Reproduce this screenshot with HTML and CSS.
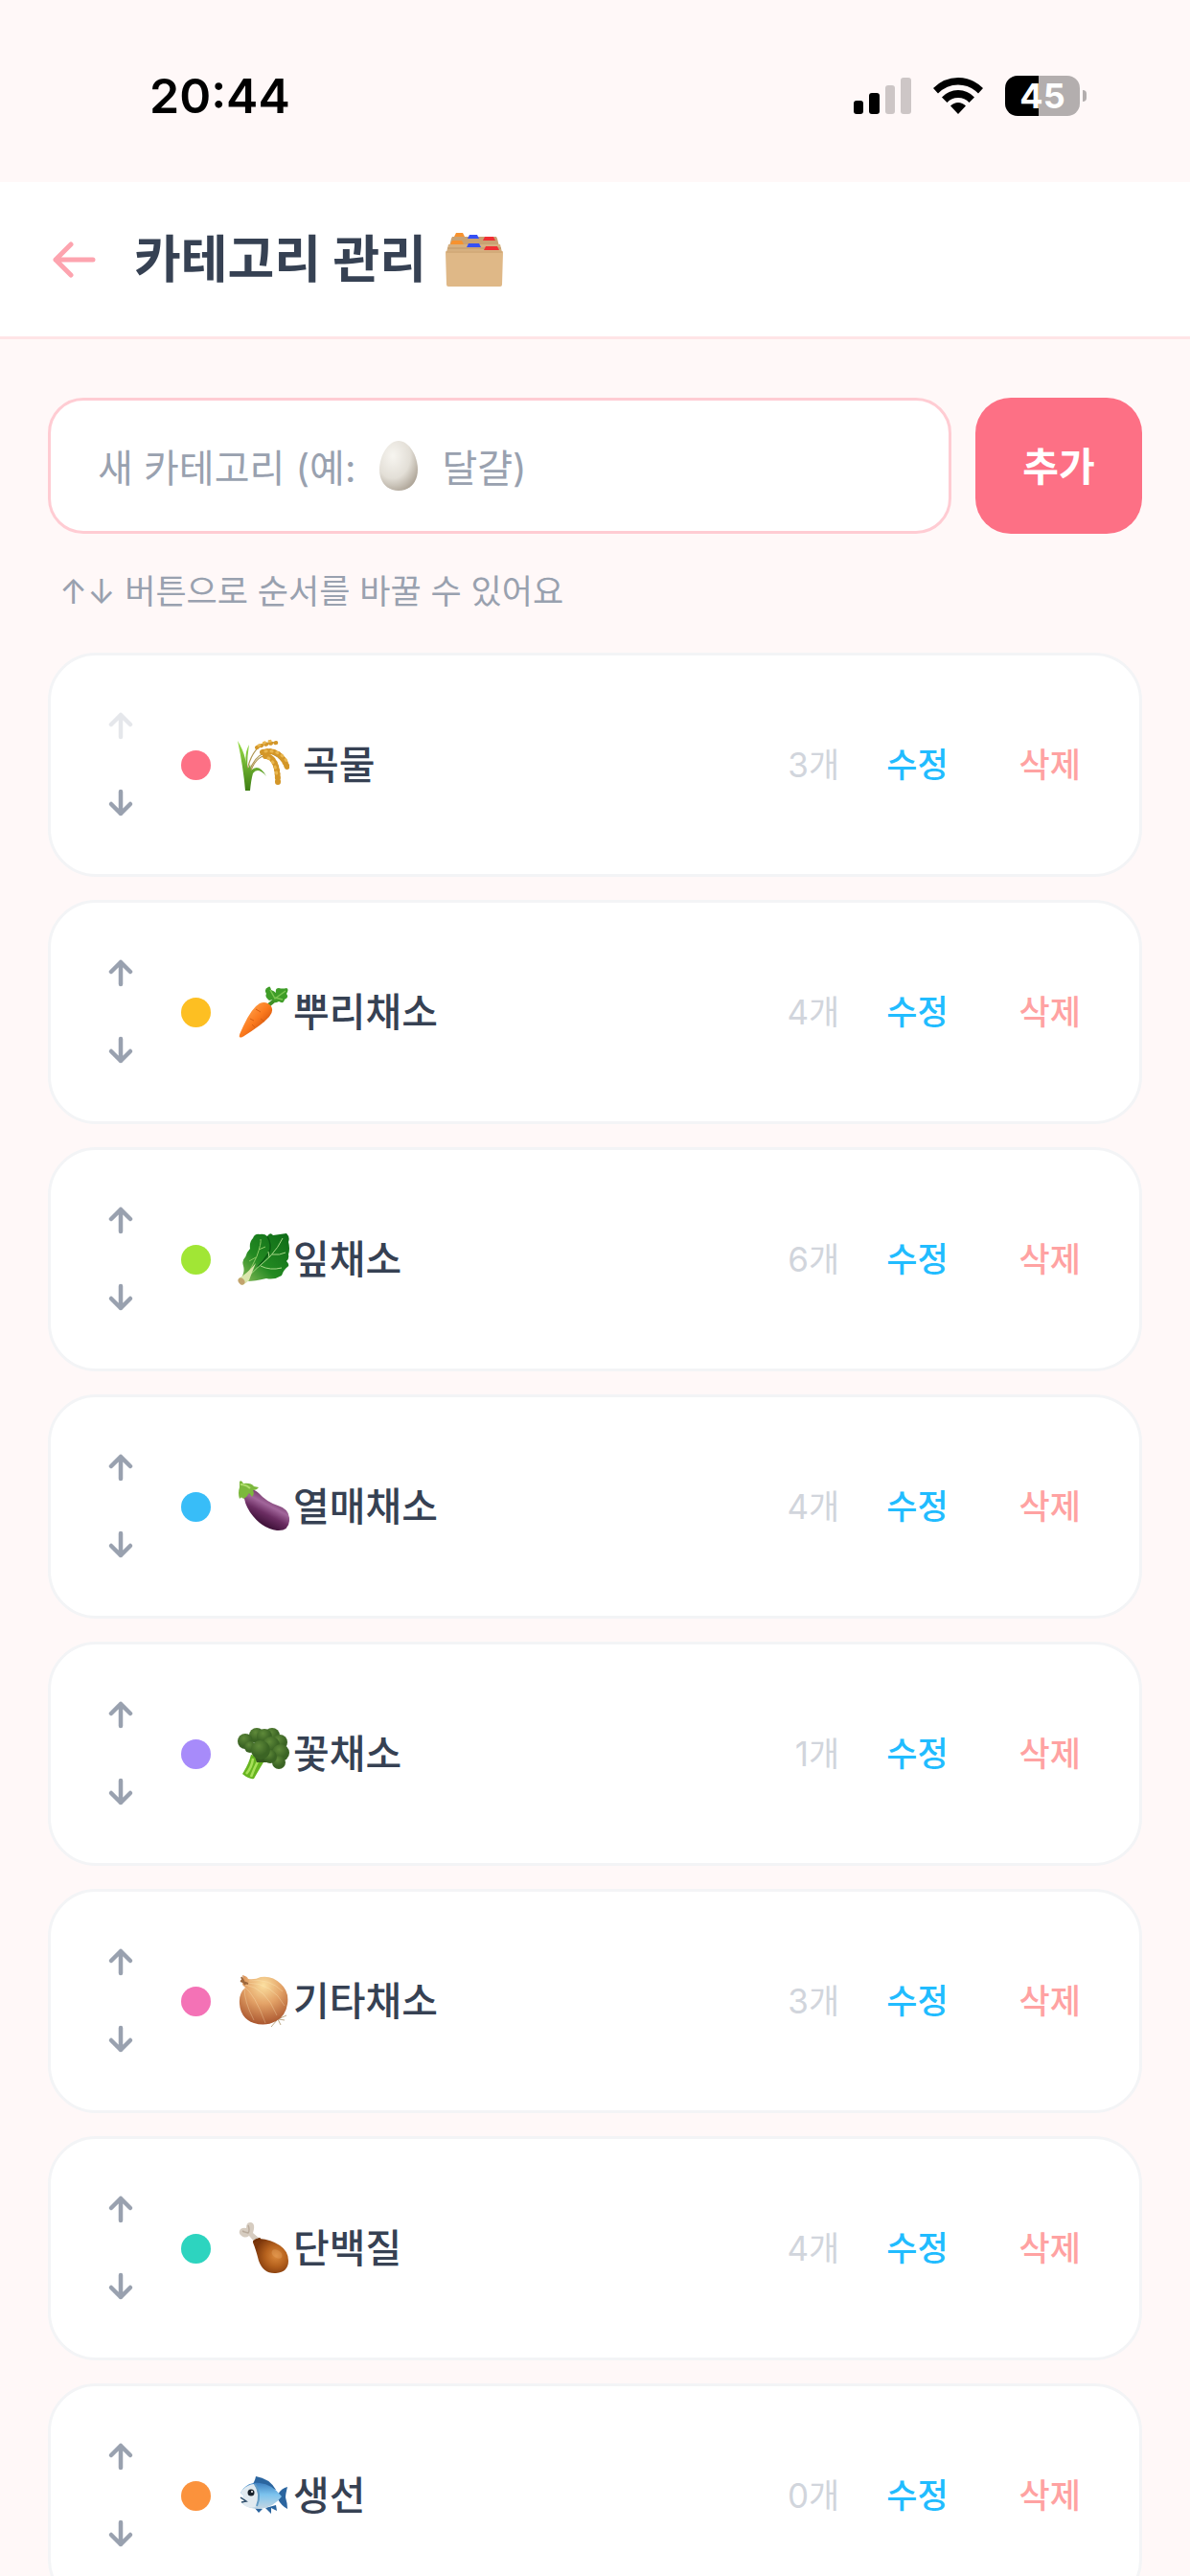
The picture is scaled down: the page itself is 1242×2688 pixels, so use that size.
FILE: index.html
```html
<!DOCTYPE html>
<html lang="ko">
<head>
    <meta charset="UTF-8">
    <meta name="viewport" content="width=device-width, initial-scale=1.0">
    <title>카테고리 관리</title>
    <link rel="stylesheet" href="styles.css">
</head>
<body>
    <!-- 공용 화살표 아이콘 -->
    <svg class="sprite" aria-hidden="true">
        <symbol id="up" viewBox="0 0 28 32">
            <path d="M14 27V4M4 14L14 4l10 10" fill="none" stroke="currentColor" stroke-width="4.5" stroke-linecap="round" stroke-linejoin="round"/>
        </symbol>
        <symbol id="down" viewBox="0 0 28 32">
            <path d="M14 4v23M4 17l10 10 10-10" fill="none" stroke="currentColor" stroke-width="4.5" stroke-linecap="round" stroke-linejoin="round"/>
        </symbol>
    </svg>

    <div class="status-bar">
        <span class="time">20:44</span>
        <div class="status-icons">
            <svg width="60" height="38" viewBox="0 0 60 38">
                <rect x="0" y="24" width="10" height="14" rx="3"/>
                <rect x="16" y="16" width="11" height="22" rx="3"/>
                <rect x="33" y="8" width="10" height="30" rx="3" fill="#cdc6c6"/>
                <rect x="49" y="0" width="11" height="38" rx="3" fill="#cdc6c6"/>
            </svg>
            <svg width="52" height="38" viewBox="0 0 52 38">
                <path d="M0 11Q11 0 26 0T52 11L47 16.500Q38 7.500 26 7.500T5 16.500Z"/>
                <path d="M9 20.500Q16 13 26 13T43 20.500L37.500 26Q33 21 26 21T14.500 26Z"/>
                <path d="M18 29.500Q21.500 26 26 26T34 29.500L26 38Z"/>
            </svg>
            <div class="battery">
                <span class="battery-body">45</span>
                <span class="battery-tip"></span>
            </div>
        </div>
    </div>

    <header class="header">
        <button class="back" type="button" aria-label="뒤로">
            <svg width="46" height="40" viewBox="0 0 46 40">
                <path d="M43 20H4M20 4L4 20l16 16" fill="none" stroke="currentColor" stroke-width="5" stroke-linecap="round" stroke-linejoin="round"/>
            </svg>
        </button>
        <h1>카테고리 관리</h1>
        <svg class="title-icon" viewBox="0 0 60 56">
            <path d="M9 4l2-4h7l2 4z" fill="#f7922f"/>
            <path d="M6 6l1-2h46l1 2 2 8H4z" fill="#c9a273"/>
            <path d="M23 6l2-4h8l2 4z" fill="#3550f5"/>
            <path d="M39 8l2-4h9l2 4z" fill="#f02f33"/>
            <path d="M5 12l2-4h10l2 4z" fill="#f7922f"/>
            <path d="M3 12h54l2 8H1z" fill="#d6b080"/>
            <path d="M2 16h56" stroke="#bd9668" stroke-width="1"/>
            <path d="M22 15l2-4h11l2 4z" fill="#3550f5"/>
            <path d="M40 18l2-4h12l2 4z" fill="#f02f33"/>
            <path d="M0 20q0-1 1-1h58q1 0 1 1l-1 34q0 2-2 2H3q-2 0-2-2z" fill="#dfb887"/>
            <path d="M1 20h58" stroke="#c79e6c" stroke-width="1"/>
        </svg>
    </header>

    <main>
        <form class="add-form">
            <div class="field">
                <input type="text" id="newCategory" name="newCategory" placeholder=" ">
                <label for="newCategory">
                    새 카테고리 (예:
                    <svg class="egg" viewBox="0 0 42 54">
                        <defs><radialGradient id="egg" cx="0.350" cy="0.300" r="0.750"><stop offset="0" stop-color="#f7f5f0"/><stop offset="0.600" stop-color="#e3dfd7"/><stop offset="1" stop-color="#b0a79a"/></radialGradient></defs>
                        <path d="M21 1C32 1 41 17 41 31C41 45 32 53 21 53C10 53 1 45 1 31C1 17 10 1 21 1Z" fill="url(#egg)"/>
                    </svg>
                    달걀)
                </label>
            </div>
            <button type="submit">추가</button>
        </form>
        <p class="hint">↑↓ 버튼으로 순서를 바꿀 수 있어요</p>

        <ul class="list">
            <li class="card">
                <div class="order">
                    <button type="button" aria-label="위로" disabled><svg><use href="#up"/></svg></button>
                    <button type="button" aria-label="아래로"><svg><use href="#down"/></svg></button>
                </div>
                <span class="dot rose"></span>
                <svg class="emoji" viewBox="0 0 54 54">
                    <defs><linearGradient id="stalk" x2="0" y2="1"><stop offset="0" stop-color="#9be04a"/><stop offset="1" stop-color="#3d7d13"/></linearGradient></defs>
                    <path d="M10 32Q15 12 25 7T38 4M12 34Q18 18 28 15T51 28M13 36Q18 19 30 17T43 44" fill="none" stroke="#ad9450" stroke-width="1.200"/>
                    <path d="M8 54Q6 30 0 2Q7 13 9 26Q7 15 12 6Q10 18 10 30Q11 32 13 26L14 33Q22 25 30 39Q21 29 16 36Q14 43 13 54Z" fill="url(#stalk)"/>
                    <g fill="none" stroke="#d39628" stroke-linecap="round">
                        <path d="M20 9Q28 5 41 4" stroke-width="4" stroke-dasharray="1 4"/>
                        <path d="M22 7Q30 2 39 2" stroke-width="3" stroke="#e9b64e" stroke-dasharray="1 5"/>
                        <path d="M26 14Q44 9 52 30" stroke-width="6" stroke-dasharray="1 3"/>
                        <path d="M29 13Q43 11 51 23" stroke-width="3" stroke="#e9b64e" stroke-dasharray="1 5"/>
                        <path d="M29 18Q42 19 42 45" stroke-width="6" stroke-dasharray="1 3"/>
                        <path d="M32 20Q39 23 41 38" stroke-width="3" stroke="#e9b64e" stroke-dasharray="1 5"/>
                    </g>
                </svg>
                <span class="name spaced">곡물</span>
                <span class="count">3개</span>
                <button class="edit" type="button">수정</button>
                <button class="delete" type="button">삭제</button>
            </li>

            <li class="card">
                <div class="order">
                    <button type="button" aria-label="위로"><svg><use href="#up"/></svg></button>
                    <button type="button" aria-label="아래로"><svg><use href="#down"/></svg></button>
                </div>
                <span class="dot amber"></span>
                <svg class="emoji" viewBox="0 0 54 54">
                    <defs><linearGradient id="carrot" x1="0.200" y1="0.200" x2="0.800" y2="0.800"><stop offset="0" stop-color="#ffa04a"/><stop offset="0.500" stop-color="#fb7a1e"/><stop offset="1" stop-color="#cf4f0a"/></linearGradient></defs>
                    <path d="M31 21L42 12" stroke="#3f8f28" stroke-width="4"/>
                    <path d="M33 15Q28 11 30 8Q27 3 32 1Q34-1 35 4Q38 5 40 7Q39 2 43 2Q47 3 51 2Q54 3 51 8Q54 12 49 14Q48 19 43 16Q38 19 37 14Z" fill="#3f9d28"/>
                    <path d="M34 4L39 13L50 5M39 12l8 2" fill="none" stroke="#7cc552" stroke-width="1.500"/>
                    <path d="M2 53Q1 52 4 46Q14 23 23 18Q30 15 35 21Q38 26 33 32Q25 41 5 53Q3 54 2 53Z" fill="url(#carrot)"/>
                    <path d="M19 24l5 3M28 37l-4-3M13 34l4 2M18 43l-3-3" stroke="#d85f10" stroke-width="1"/>
                </svg>
                <span class="name">뿌리채소</span>
                <span class="count">4개</span>
                <button class="edit" type="button">수정</button>
                <button class="delete" type="button">삭제</button>
            </li>

            <li class="card">
                <div class="order">
                    <button type="button" aria-label="위로"><svg><use href="#up"/></svg></button>
                    <button type="button" aria-label="아래로"><svg><use href="#down"/></svg></button>
                </div>
                <span class="dot lime"></span>
                <svg class="emoji" viewBox="0 0 54 54">
                    <defs><linearGradient id="leaf" x1="1" y1="0" x2="0" y2="1"><stop offset="0" stop-color="#0d6a16"/><stop offset="0.600" stop-color="#238a22"/><stop offset="1" stop-color="#8dbd5c"/></linearGradient></defs>
                    <path d="M3 47Q8 41 6 34Q4 28 8 25Q9 20 13 16Q12 9 16 5Q18 0 23 1Q28 0 31 3Q34-2 37 2L51 0Q55 4 53 9Q55 16 53 22Q54 27 51 29Q55 33 52 35Q48 38 46 44Q38 49 30 47Q18 50 10 50Z" fill="url(#leaf)"/>
                    <path d="M31 3Q36 12 33 20Q27 29 21 35" fill="none" stroke="#0b5a12" stroke-width="1.500"/>
                    <path d="M8 47Q15 35 20 24Q25 10 24 6M19 25l-7 4M22 17l7-3" fill="none" stroke="#8ecb67" stroke-width="1"/>
                    <path d="M8 48Q20 36 34 24Q43 14 47 5M24 34Q34 39 46 36M33 25l-1-6M36 22q8 1 14-2" fill="none" stroke="#a6d887" stroke-width="1"/>
                    <path d="M5 54Q0 51 1 47Q9 43 19 31Q14 43 12 49Q9 52 5 54Z" fill="#dbe6ad"/>
                    <ellipse cx="4" cy="50" rx="3" ry="4" transform="rotate(-40 4 50)" fill="#c2a36d"/>
                </svg>
                <span class="name">잎채소</span>
                <span class="count">6개</span>
                <button class="edit" type="button">수정</button>
                <button class="delete" type="button">삭제</button>
            </li>

            <li class="card">
                <div class="order">
                    <button type="button" aria-label="위로"><svg><use href="#up"/></svg></button>
                    <button type="button" aria-label="아래로"><svg><use href="#down"/></svg></button>
                </div>
                <span class="dot sky"></span>
                <svg class="emoji" viewBox="0 0 54 54">
                    <defs><linearGradient id="eggplant" x1="0.700" y1="0.200" x2="0.350" y2="0.800"><stop offset="0" stop-color="#6a3060"/><stop offset="0.350" stop-color="#a2669b"/><stop offset="0.650" stop-color="#6b2d62"/><stop offset="1" stop-color="#41133b"/></linearGradient></defs>
                    <path d="M6 13Q13 5 22 13Q30 22 42 26Q55 30 54 42Q53 53 41 52Q25 50 13 33Q7 24 6 13Z" fill="url(#eggplant)"/>
                    <path d="M2 1Q4-1 6 3Q14 2 17 6L22 7Q20 10 16 10Q18 14 15 17L12 13Q10 17 6 19Q4 16 2 19Q0 13 2 7Z" fill="#7cb83d"/>
                    <path d="M3 4Q9 4 13 8" fill="none" stroke="#b0de6e" stroke-width="2"/>
                </svg>
                <span class="name">열매채소</span>
                <span class="count">4개</span>
                <button class="edit" type="button">수정</button>
                <button class="delete" type="button">삭제</button>
            </li>

            <li class="card">
                <div class="order">
                    <button type="button" aria-label="위로"><svg><use href="#up"/></svg></button>
                    <button type="button" aria-label="아래로"><svg><use href="#down"/></svg></button>
                </div>
                <span class="dot violet"></span>
                <svg class="emoji" viewBox="0 0 54 54">
                    <defs><radialGradient id="floret" cx="0.400" cy="0.300"><stop offset="0" stop-color="#5f8a3a"/><stop offset="1" stop-color="#3b6424"/></radialGradient></defs>
                    <path d="M14 28L30 31Q25 39 17 53Q12 54 5 48Q12 37 14 28Z" fill="#67b520"/>
                    <path d="M16 32Q15 41 9 48M22 33Q17 43 14 51" fill="none" stroke="#a8e05a" stroke-width="2.500"/>
                    <path d="M14 18h28v18H20z" fill="#34591f"/>
                    <g fill="url(#floret)">
                        <circle cx="20" cy="8" r="8"/><circle cx="36" cy="8" r="8"/><circle cx="28" cy="9" r="8"/>
                        <circle cx="8" cy="14" r="8"/><circle cx="44" cy="15" r="8"/><circle cx="35" cy="18" r="9"/>
                        <circle cx="13" cy="20" r="6"/><circle cx="45" cy="26" r="9"/><circle cx="43" cy="36" r="7"/>
                        <circle cx="34" cy="30" r="7"/><circle cx="24" cy="23" r="10"/>
                    </g>
                </svg>
                <span class="name">꽃채소</span>
                <span class="count">1개</span>
                <button class="edit" type="button">수정</button>
                <button class="delete" type="button">삭제</button>
            </li>

            <li class="card">
                <div class="order">
                    <button type="button" aria-label="위로"><svg><use href="#up"/></svg></button>
                    <button type="button" aria-label="아래로"><svg><use href="#down"/></svg></button>
                </div>
                <span class="dot pink"></span>
                <svg class="emoji" viewBox="0 0 54 54">
                    <defs><radialGradient id="onion" cx="0.500" cy="0.200" r="0.850"><stop offset="0" stop-color="#fbdf9f"/><stop offset="0.450" stop-color="#e3a267"/><stop offset="1" stop-color="#a34d28"/></radialGradient></defs>
                    <path d="M43 46l6 1M42 46l9-4M41 47l-6 7M42 46l3 6" stroke="#bda987" stroke-width="1"/>
                    <path d="M5 10Q6 7 3 5L6 4L5 0Q10 1 11 4Q18 5 24 2Q36 0 45 9Q54 17 52 30Q50 43 40 48Q29 54 17 50Q3 45 2 30Q1 19 8 13Z" fill="url(#onion)"/>
                    <path d="M8 10Q29 13 41 42M7 12Q18 20 29 50M7 13Q7 28 17 47M10 8Q36 8 49 32M12 6Q33 3 47 17" fill="none" stroke="#fff0c4" stroke-opacity="0.300" stroke-width="1"/>
                    <path d="M4 2l4 8M3 6l8 3" stroke="#9d673c" stroke-width="2"/>
                </svg>
                <span class="name">기타채소</span>
                <span class="count">3개</span>
                <button class="edit" type="button">수정</button>
                <button class="delete" type="button">삭제</button>
            </li>

            <li class="card">
                <div class="order">
                    <button type="button" aria-label="위로"><svg><use href="#up"/></svg></button>
                    <button type="button" aria-label="아래로"><svg><use href="#down"/></svg></button>
                </div>
                <span class="dot teal"></span>
                <svg class="emoji" viewBox="0 0 54 54">
                    <defs><radialGradient id="meat" cx="0.650" cy="0.500" r="0.600"><stop offset="0" stop-color="#dc8a3d"/><stop offset="0.500" stop-color="#b5611d"/><stop offset="1" stop-color="#7c370c"/></radialGradient></defs>
                    <path d="M9 6Q9 0 13 0Q18 0 17 7L16 11L23 17L19 22L12 14Q8 17 4 14Q0 11 3 7Q6 5 9 6Z" fill="#d6ccc0"/>
                    <path d="M11 3Q13 8 11 11Q7 10 5 9" fill="none" stroke="#b9ab9c" stroke-width="1.500"/>
                    <path d="M16 21Q18 16 23 17Q35 18 44 24Q53 30 53 40Q53 52 40 53Q27 54 22 40Q19 28 16 21Z" fill="url(#meat)"/>
                    <path d="M17 20l6-3" stroke="#713008" stroke-width="2" stroke-linecap="round"/>
                    <ellipse cx="41" cy="33" rx="6" ry="4" transform="rotate(35 41 33)" fill="#f0b06c" opacity="0.300"/>
                </svg>
                <span class="name">단백질</span>
                <span class="count">4개</span>
                <button class="edit" type="button">수정</button>
                <button class="delete" type="button">삭제</button>
            </li>

            <li class="card">
                <div class="order">
                    <button type="button" aria-label="위로"><svg><use href="#up"/></svg></button>
                    <button type="button" aria-label="아래로"><svg><use href="#down"/></svg></button>
                </div>
                <span class="dot orange"></span>
                <svg class="emoji" viewBox="0 0 54 54">
                    <defs><linearGradient id="fish" x2="0" y2="1"><stop offset="0" stop-color="#3d7fc0"/><stop offset="0.450" stop-color="#7cc3ee"/><stop offset="1" stop-color="#c5d6e2"/></linearGradient></defs>
                    <path d="M14 17Q18 13 19 7Q33 9 40 21ZM42 26Q46 19 52 18Q50 26 50 29Q52 35 52 41Q46 38 42 31ZM17 39l5 6 4-4ZM29 40l6 6v-6l6 3-1-6Z" fill="#2b659f"/>
                    <path d="M3 24Q10 12 23 14Q36 15 46 28Q37 40 23 41Q9 41 4 34L8 32L3 30L7 28Z" fill="url(#fish)"/>
                    <path d="M3 24Q8 16 17 15Q24 25 21 37Q16 42 8 38L4 34L8 32L3 30L7 28Z" fill="#e1eaf0"/>
                    <path d="M18 15Q25 25 20 38" fill="none" stroke="#639bc4" stroke-width="2"/>
                    <path d="M3 29l6 4-5 1" fill="none" stroke="#31506d" stroke-width="1.500"/>
                    <circle cx="14" cy="24" r="3.500" fill="#18212b"/>
                    <circle cx="15" cy="23" r="1" fill="#fff"/>
                </svg>
                <span class="name">생선</span>
                <span class="count">0개</span>
                <button class="edit" type="button">수정</button>
                <button class="delete" type="button">삭제</button>
            </li>
        </ul>
    </main>
</body>
</html>
```
FILE: styles.css
```css
* {
    box-sizing: border-box;
}

body {
    margin: 0;
    height: 100vh;
    overflow: hidden;
    display: flex;
    flex-direction: column;
    background-color: #fff8f8;
    color: #364153;
    font-family: Inter, "Noto Sans CJK KR", sans-serif;
}

button,
input {
    font-family: inherit;
}

button {
    border: none;
    background: none;
    padding: 0;
    cursor: pointer;
}

svg {
    display: block;
    flex: none;
}

.sprite {
    position: absolute;
    width: 0;
    height: 0;
}

/* 상태 표시줄 */
.status-bar {
    flex: none;
    display: flex;
    align-items: center;
    justify-content: space-between;
    height: 190px;
    padding: 10px 108px 0 156px;
    color: #000;
}

.time {
    font-size: 50px;
    line-height: 60px;
    font-weight: 600;
}

.status-icons {
    display: flex;
    align-items: center;
    gap: 23px;
}

.battery {
    display: flex;
    align-items: center;
    gap: 3px;
}

.battery-body {
    width: 78px;
    border-radius: 13px;
    background: linear-gradient(to right, #000 35px, #b3aeae 35px);
    color: #fff;
    font-size: 36px;
    line-height: 42px;
    font-weight: 700;
    text-align: center;
}

.battery-tip {
    width: 4px;
    height: 12px;
    border-radius: 0 6px 6px 0;
    background-color: #b3aeae;
}

/* 헤더 */
.header {
    flex: none;
    display: flex;
    align-items: center;
    height: 164px;
    padding: 0 54px;
    background-color: #fff;
    border-bottom: 3px solid #ffe4e6;
}

.back {
    color: #fda4af;
    margin-right: 40px;
}

h1 {
    margin: 0;
    font-size: 53px;
    line-height: 72px;
    font-weight: 700;
}

.title-icon {
    width: 60px;
    height: 56px;
    margin-left: 20px;
}

/* 본문 */
main {
    flex: 1;
    min-height: 0;
    padding: 61px 50px 0;
}

.add-form {
    display: flex;
    gap: 25px;
}

.field {
    position: relative;
    flex: 1;
    min-width: 0;
}

.field input {
    display: block;
    width: 100%;
    height: 142px;
    padding: 0 49px;
    border: 3px solid #ffccd3;
    border-radius: 37px;
    background-color: #fff;
    font-size: 40px;
    color: #364153;
}

/* 입력 전에만 보이는 안내 문구 */
.field label {
    position: absolute;
    top: 0;
    bottom: 0;
    left: 52px;
    display: flex;
    align-items: center;
    gap: 24px;
    font-size: 40px;
    color: #99a1af;
    pointer-events: none;
}

.field input:not(:placeholder-shown) + label {
    display: none;
}

.egg {
    width: 42px;
    height: 54px;
}

.add-form button {
    width: 174px;
    padding-bottom: 4px;
    border-radius: 37px;
    background-color: #fd7085;
    color: #fff;
    font-size: 41px;
    font-weight: 700;
}

.hint {
    margin: 32px 0 36px;
    padding: 0 12px;
    color: #99a1af;
    font-size: 35px;
    line-height: 56px;
}

.list {
    margin: 0;
    padding: 0;
    list-style: none;
    display: flex;
    flex-direction: column;
    gap: 24px;
}

.card {
    flex: none;
    display: flex;
    align-items: center;
    padding: 34px 36px 34px 34px;
    border: 3px solid #f3f4f6;
    border-radius: 50px;
    background-color: #fff;
}

.order button {
    display: flex;
    align-items: center;
    justify-content: center;
    width: 78px;
    height: 80px;
    color: #99a1af;
}

.order button:disabled {
    color: #e5e7eb;
}

.order svg {
    width: 28px;
    height: 32px;
}

.dot {
    width: 31px;
    height: 31px;
    margin: 0 28px 0 24px;
    border-radius: 50%;
}

.rose { background-color: #fd7085; }
.amber { background-color: #fdbf22; }
.lime { background-color: #a1e635; }
.sky { background-color: #38bdf8; }
.violet { background-color: #a78bfa; }
.pink { background-color: #f472b6; }
.teal { background-color: #2dd4bf; }
.orange { background-color: #fb923c; }

.emoji {
    width: 54px;
    height: 54px;
}

.name {
    flex: 1;
    margin-left: 4px;
    font-size: 41px;
    line-height: 56px;
    font-weight: 500;
}

.name.spaced {
    margin-left: 14px;
}

.count,
.edit,
.delete {
    font-size: 35px;
    line-height: 56px;
}

.count {
    color: #d1d5dc;
}

.edit,
.delete {
    padding: 0 25px;
    margin-left: 24px;
    font-weight: 500;
}

.edit {
    color: #21bcff;
}

.delete {
    color: #ffa2a2;
}
```
